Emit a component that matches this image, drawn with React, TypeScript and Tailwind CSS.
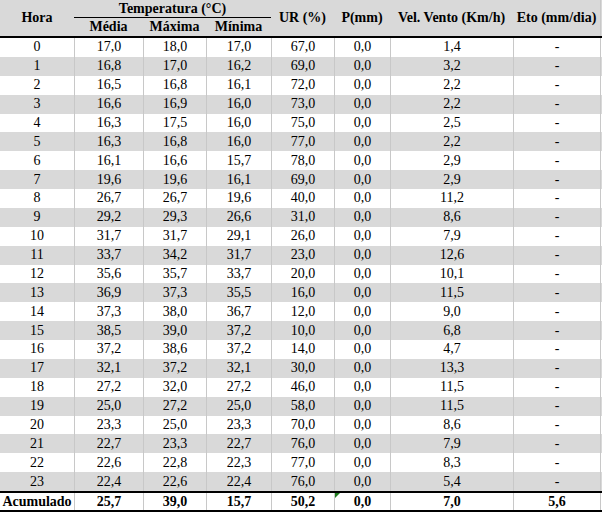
import React from 'react'

const rows: [string, string, string, string, string, string, string, string][] = [
  ['0', '17,0', '18,0', '17,0', '67,0', '0,0', '1,4', '-'],
  ['1', '16,8', '17,0', '16,2', '69,0', '0,0', '3,2', '-'],
  ['2', '16,5', '16,8', '16,1', '72,0', '0,0', '2,2', '-'],
  ['3', '16,6', '16,9', '16,0', '73,0', '0,0', '2,2', '-'],
  ['4', '16,3', '17,5', '16,0', '75,0', '0,0', '2,5', '-'],
  ['5', '16,3', '16,8', '16,0', '77,0', '0,0', '2,2', '-'],
  ['6', '16,1', '16,6', '15,7', '78,0', '0,0', '2,9', '-'],
  ['7', '19,6', '19,6', '16,1', '69,0', '0,0', '2,9', '-'],
  ['8', '26,7', '26,7', '19,6', '40,0', '0,0', '11,2', '-'],
  ['9', '29,2', '29,3', '26,6', '31,0', '0,0', '8,6', '-'],
  ['10', '31,7', '31,7', '29,1', '26,0', '0,0', '7,9', '-'],
  ['11', '33,7', '34,2', '31,7', '23,0', '0,0', '12,6', '-'],
  ['12', '35,6', '35,7', '33,7', '20,0', '0,0', '10,1', '-'],
  ['13', '36,9', '37,3', '35,5', '16,0', '0,0', '11,5', '-'],
  ['14', '37,3', '38,0', '36,7', '12,0', '0,0', '9,0', '-'],
  ['15', '38,5', '39,0', '37,2', '10,0', '0,0', '6,8', '-'],
  ['16', '37,2', '38,6', '37,2', '14,0', '0,0', '4,7', '-'],
  ['17', '32,1', '37,2', '32,1', '30,0', '0,0', '13,3', '-'],
  ['18', '27,2', '32,0', '27,2', '46,0', '0,0', '11,5', '-'],
  ['19', '25,0', '27,2', '25,0', '58,0', '0,0', '11,5', '-'],
  ['20', '23,3', '25,0', '23,3', '70,0', '0,0', '8,6', '-'],
  ['21', '22,7', '23,3', '22,7', '76,0', '0,0', '7,9', '-'],
  ['22', '22,6', '22,8', '22,3', '77,0', '0,0', '8,3', '-'],
  ['23', '22,4', '22,6', '22,4', '76,0', '0,0', '5,4', '-'],
]

const cols = 'grid grid-cols-[74px_69px_63px_65px_63px_56px_123px_88px]'

export default function App() {
  return (
    <div className="w-[602px] h-[514px] bg-white text-[14px] leading-none text-black font-['Liberation_Serif','Times_New_Roman',serif]">
      {/* cabeçalho */}
      <div className={`${cols} h-[38px] bg-[#d9d9d9] border-b-2 border-black font-bold`}>
        <div className="flex items-center justify-center">Hora</div>
        <div className="col-span-3 flex flex-col">
          <div className="h-[18px] flex items-center justify-center border-b border-black">Temperatura (°C)</div>
          <div className="flex-1 grid grid-cols-[69px_63px_65px]">
            <div className="flex items-center justify-center">Média</div>
            <div className="flex items-center justify-center">Máxima</div>
            <div className="flex items-center justify-center">Mínima</div>
          </div>
        </div>
        <div className="flex items-center justify-center">UR (%)</div>
        <div className="flex items-center justify-center">P(mm)</div>
        <div className="flex items-center justify-center">Vel. Vento (Km/h)</div>
        <div className="flex items-center justify-center border-r border-[#c8c8c8]">Eto (mm/dia)</div>
      </div>

      {rows.map((r, i) => (
        <div key={i} className={`${cols} h-[18.875px] ${i % 2 ? 'bg-[#d9d9d9]' : 'bg-white'}`}>
          {r.map((v, j) => (
            <div
              key={j}
              className={`flex items-center justify-center ${j > 0 ? 'border-l border-[#c8c8c8]' : ''} ${j === 7 ? 'border-r' : ''}`}
            >
              {v}
            </div>
          ))}
        </div>
      ))}

      {/* linha de totais */}
      <div className={`${cols} h-[21px] border-t-2 border-b-2 border-black bg-white font-bold`}>
        <div className="flex items-center justify-center">Acumulado</div>
        <div className="flex items-center justify-center border-l border-[#c8c8c8]">25,7</div>
        <div className="flex items-center justify-center border-l border-[#c8c8c8]">39,0</div>
        <div className="flex items-center justify-center border-l border-[#c8c8c8]">15,7</div>
        <div className="flex items-center justify-center border-l border-[#c8c8c8]">50,2</div>
        <div className="relative flex items-center justify-center border-l border-[#c8c8c8]">
          <span className="absolute left-0 top-0 w-0 h-0 border-t-[5px] border-r-[5px] border-t-[#1e7b1e] border-r-transparent" />
          0,0
        </div>
        <div className="flex items-center justify-center border-l border-[#c8c8c8]">7,0</div>
        <div className="flex items-center justify-center border-l border-r border-[#c8c8c8]">5,6</div>
      </div>
    </div>
  )
}
